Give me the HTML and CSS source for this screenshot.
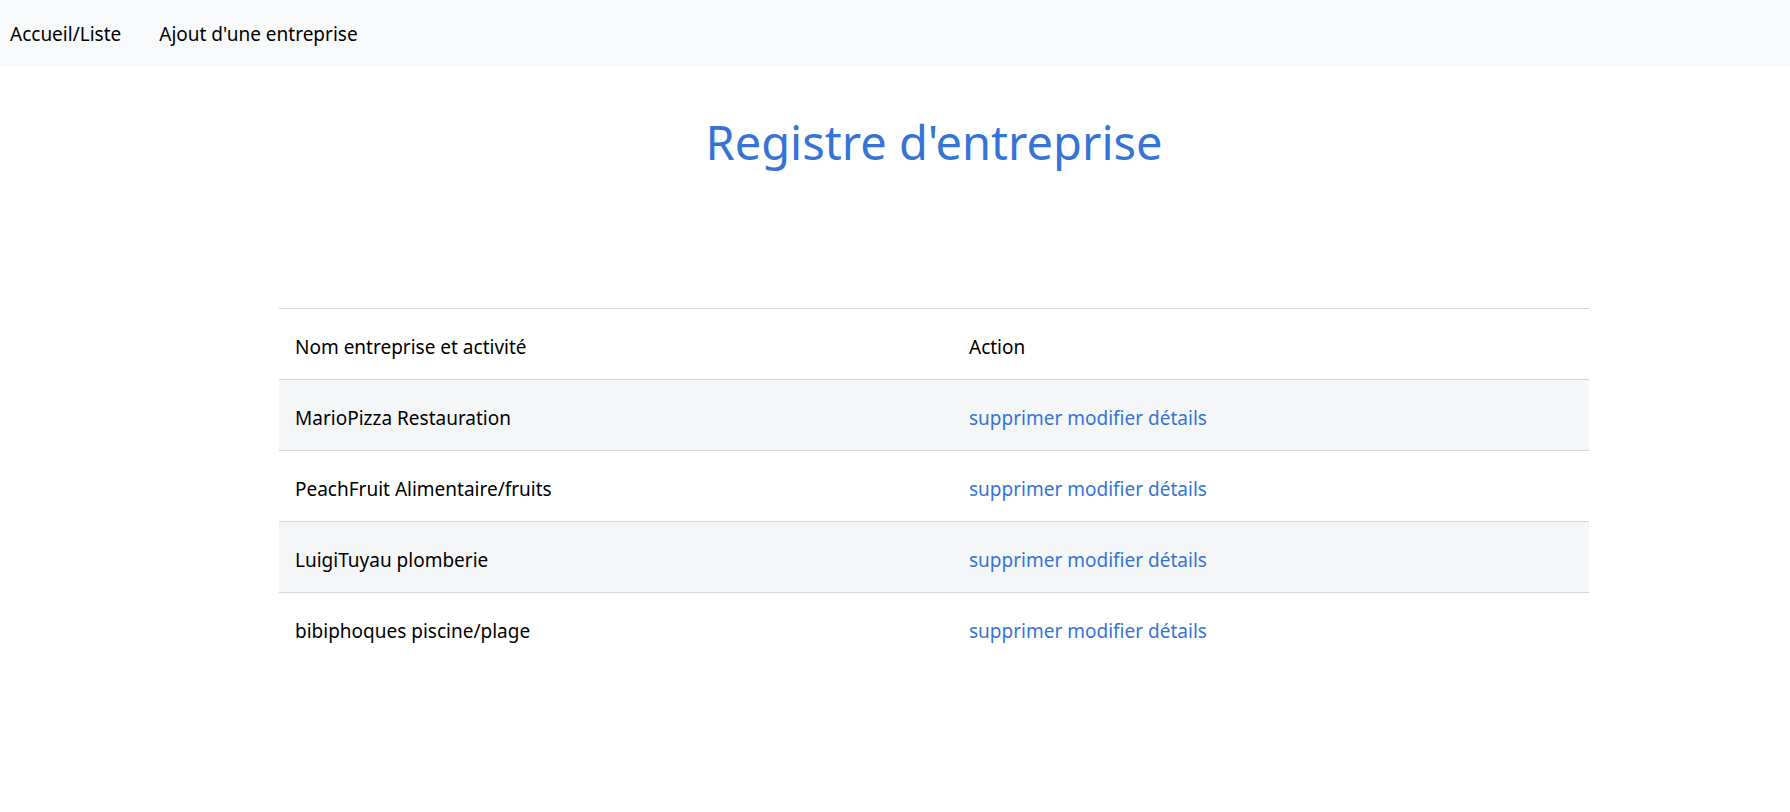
FILE: index.html
```html
<!DOCTYPE html>
<html lang="fr">
<head>
<meta charset="utf-8">
<title>Registre d'entreprise</title>
<link rel="stylesheet" href="styles.css">
</head>
<body>
<nav class="navbar">
  <a class="nav-link" href="#">Accueil/Liste</a>
  <a class="nav-link" href="#">Ajout d'une entreprise</a>
</nav>
<main class="container">
  <h1 class="title">Registre d'entreprise</h1>
  <table class="table">
    <thead>
      <tr><th class="col-name">Nom entreprise et activité</th><th>Action</th></tr>
    </thead>
    <tbody>
      <tr class="striped"><td>MarioPizza Restauration</td><td><a href="#">supprimer</a> <a href="#">modifier</a> <a href="#">détails</a></td></tr>
      <tr><td>PeachFruit Alimentaire/fruits</td><td><a href="#">supprimer</a> <a href="#">modifier</a> <a href="#">détails</a></td></tr>
      <tr class="striped"><td>LuigiTuyau plomberie</td><td><a href="#">supprimer</a> <a href="#">modifier</a> <a href="#">détails</a></td></tr>
      <tr class="last"><td>bibiphoques piscine/plage</td><td><a href="#">supprimer</a> <a href="#">modifier</a> <a href="#">détails</a></td></tr>
    </tbody>
  </table>
</main>
</body>
</html>
```

FILE: styles.css
```css
html, body {
  margin: 0;
  padding: 0;
  background: #fff;
  font-family: "Noto Sans", "Open Sans", sans-serif;
  font-size: 19px;
  color: #000;
}

.navbar {
  display: flex;
  align-items: center;
  gap: 38px;
  height: 67px;
  padding-left: 10px;
  background: #f8f9fa;
}

.nav-link {
  color: #000;
  text-decoration: none;
  font-size: 19px;
}

.container {
  margin-left: 279px;
  width: 1310px;
}

.title {
  margin: 45px 0 136px;
  text-align: center;
  font-weight: 400;
  font-size: 47px;
  line-height: 60px;
  color: #3574d6;
}

.table {
  width: 100%;
  border-collapse: collapse;
  border-top: 1px solid #d3d6da;
}

.table th,
.table td {
  height: 71px;
  box-sizing: border-box;
  padding: 6px 16px 0;
  text-align: left;
  font-weight: 400;
  vertical-align: middle;
  border-bottom: 1px solid #d3d6da;
}

.table .col-name {
  width: 674px;
}

.table tr.striped td {
  background: #f5f6f8;
}

.table tr.last td {
  border-bottom: none;
}

.table a {
  color: #3574d6;
  text-decoration: none;
}
```
